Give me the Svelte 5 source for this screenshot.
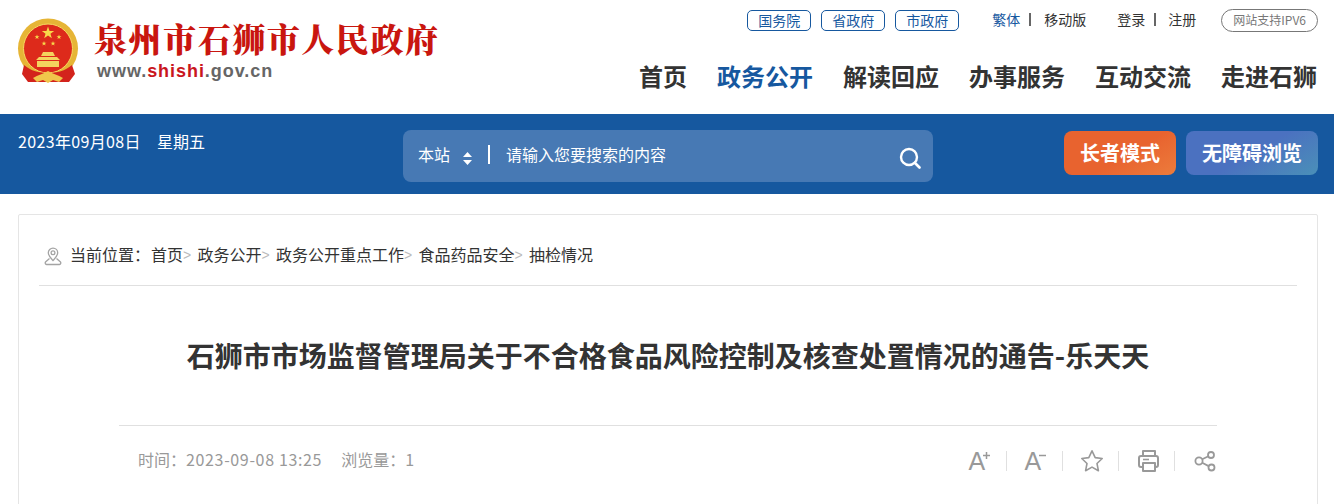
<script>
  const govLinks = ['国务院', '省政府', '市政府'];
  const nav = [
    { label: '首页' },
    { label: '政务公开', active: true },
    { label: '解读回应' },
    { label: '办事服务' },
    { label: '互动交流' },
    { label: '走进石狮' }
  ];
  const crumbs = ['首页', '政务公开', '政务公开重点工作', '食品药品安全', '抽检情况'];
  const colon = '\uFF1A';
  const star = (cx, cy, r) => {
    const pts = [];
    for (let i = 0; i < 10; i++) {
      const a = -Math.PI / 2 + (i * Math.PI) / 5;
      const d = i % 2 ? r * 0.4 : r;
      pts.push(`${(cx + d * Math.cos(a)).toFixed(2)},${(cy + d * Math.sin(a)).toFixed(2)}`);
    }
    return pts.join(' ');
  };
</script>

<div class="page">
  <header class="top">
    <div class="brand">
      <svg class="emblem" width="62" height="66" viewBox="0 0 62 66" aria-hidden="true">
        <circle cx="31" cy="30.500" r="30" fill="#e6b536" />
        <circle cx="31" cy="30.500" r="24.500" fill="#dd2a1b" stroke="#f6d860" stroke-width="1" />
        <polygon points={star(31, 15, 6.5)} fill="#f8d84a" />
        <polygon points={star(20, 19, 2.6)} fill="#f8d84a" />
        <polygon points={star(42, 19, 2.6)} fill="#f8d84a" />
        <polygon points={star(27, 25.5, 2.6)} fill="#f8d84a" />
        <polygon points={star(36, 25.5, 2.6)} fill="#f8d84a" />
        <path d="M26 34h10l2 4H24zM22 39h18l3 3H19zM20 43h22v6H20z" fill="#f4d35e" />
        <path d="M7 47c7 6 15 8 24 8s17-2 24-8l3 9-6 8H11l-6-8z" fill="#d3231c" />
        <path d="M16 60c5-3 10-4 15-7 5 3 10 4 15 7l-4 4-6-2-5 3-5-3-6 2z" fill="#f0c64b" />
      </svg>
      <div class="brand-text">
        <div class="wordmark">泉州市石狮市人民政府</div>
        <div class="domain">www.<span>shishi</span>.gov.cn</div>
      </div>
    </div>

    <div class="top-right">
      <div class="utility">
        <div class="gov-links">
          {#each govLinks as g}
            <a class="pill" href="#top">{g}</a>
          {/each}
        </div>
        <div class="text-links first">
          <a class="blue" href="#top">繁体</a><i></i><a href="#top">移动版</a>
        </div>
        <div class="text-links second">
          <a href="#top">登录</a><i></i><a href="#top">注册</a>
        </div>
        <a class="ipv6" href="#top">网站支持IPV6</a>
      </div>
      <nav class="main-nav">
        {#each nav as n}
          <a href="#top" class:active={n.active}>{n.label}</a>
        {/each}
      </nav>
    </div>
  </header>

  <section class="band">
    <div class="date"><span>2023年09月08日</span><span class="weekday">星期五</span></div>
    <div class="search">
      <span class="scope">本站</span>
      <svg class="updown" width="9" height="13" viewBox="0 0 9 13" aria-hidden="true">
        <path d="M4.5 0 9 5H0zM0 8h9l-4.500 5z" fill="#fff" />
      </svg>
      <span class="bar"></span>
      <span class="placeholder">请输入您要搜索的内容</span>
      <svg class="magnifier" width="22" height="22" viewBox="0 0 22 22" aria-hidden="true">
        <circle cx="10" cy="10" r="8" fill="none" stroke="#fff" stroke-width="2.400" />
        <path d="M16 16l4.500 4.500" stroke="#fff" stroke-width="2.600" stroke-linecap="round" />
      </svg>
    </div>
    <div class="modes">
      <a class="mode elder" href="#top">长者模式</a>
      <a class="mode access" href="#top">无障碍浏览</a>
    </div>
  </section>

  <main class="card">
    <div class="crumbs">
      <svg class="pin" width="18" height="19" viewBox="0 0 18 19" aria-hidden="true">
        <g fill="none" stroke="#a4a4a4" stroke-width="1.300">
          <path d="M9 13.500C6.500 10.800 4.300 8.800 4.300 5.800a4.700 4.700 0 0 1 9.400 0c0 3-2.200 5-4.700 7.700z" />
          <circle cx="9" cy="5.800" r="1.900" />
          <path d="M5.500 11.500 1.500 15c-.6.8-.3 2.500 1 2.500h13c1.300 0 1.600-1.700 1-2.500l-4-3.500" />
        </g>
      </svg>
      <span class="lead">当前位置{colon}</span>
      {#each crumbs as c, i}
        <a href="#top">{c}</a>{#if i < crumbs.length - 1}<span class="sep">&gt;</span>{/if}
      {/each}
    </div>

    <h1>石狮市市场监督管理局关于不合格食品风险控制及核查处置情况的通告-乐天天</h1>

    <div class="meta">
      <div class="stats">
        <span>时间{colon}<span class="num">2023-09-08 13:25</span></span>
        <span>浏览量{colon}1</span>
      </div>
      <div class="tools">
        <svg class="tool" width="24" height="24" viewBox="0 0 24 24" aria-hidden="true">
          <text class="font-a" x="1.500" y="21">A</text>
          <path d="M16 6.500h7M19.500 3v7" stroke="#999" stroke-width="1.500" />
        </svg>
        <i></i>
        <svg class="tool" width="24" height="24" viewBox="0 0 24 24" aria-hidden="true">
          <text class="font-a" x="1.500" y="21">A</text>
          <path d="M16 6.500h7" stroke="#999" stroke-width="1.500" />
        </svg>
        <i></i>
        <svg class="tool" width="24" height="24" viewBox="0 0 24 24" aria-hidden="true">
          <path d="M13 1.800l3.200 6.800 7 .9-5.200 5 1.400 7.200-6.400-3.600-6.400 3.600 1.400-7.200-5.200-5 7-.9z" fill="none" stroke="#999" stroke-width="1.600" stroke-linejoin="round" />
        </svg>
        <i></i>
        <svg class="tool" width="24" height="24" viewBox="0 0 24 24" aria-hidden="true">
          <g fill="#fff" stroke="#999" stroke-width="2" stroke-linejoin="round">
            <path d="M8 7V2h12v5" fill="none" />
            <rect x="4" y="7" width="19" height="11" rx="2" />
            <rect x="8" y="14" width="12" height="8" />
            <path d="M8 10.500h6" fill="none" stroke-width="1.600" />
          </g>
        </svg>
        <i></i>
        <svg class="tool" width="24" height="24" viewBox="0 0 24 24" aria-hidden="true">
          <g fill="none" stroke="#999" stroke-width="1.800">
            <circle cx="8" cy="12" r="3.600" />
            <circle cx="20" cy="6" r="3" />
            <circle cx="20.500" cy="18.500" r="3" />
            <path d="M11.200 10.300l6.200-3M11.200 13.700l6.500 3.400" />
          </g>
        </svg>
      </div>
    </div>
  </main>
</div>

<style>
  :global(body) {
    margin: 0;
    background: #fff;
    overflow: hidden;
  }

  .page {
    font-family: "Noto Sans CJK SC", "Noto Sans", sans-serif;
    color: #333;
    height: 504px;
    overflow: hidden;
  }

  a {
    color: inherit;
    text-decoration: none;
  }

  .top {
    height: 114px;
    box-sizing: border-box;
    padding: 0 16px 0 17px;
    display: flex;
    justify-content: space-between;
  }

  .brand {
    display: flex;
    align-items: flex-start;
    padding-top: 18px;
  }

  .brand-text {
    margin-left: 15px;
  }

  .wordmark {
    font-family: "Noto Serif CJK SC", "Noto Sans CJK SC", serif;
    font-weight: 900;
    font-size: 33px;
    letter-spacing: 1.55px;
    line-height: 40px;
    color: #c9160f;
    white-space: nowrap;
  }

  .domain {
    font-family: "Liberation Sans", sans-serif;
    font-weight: 700;
    font-size: 18px;
    letter-spacing: 0.95px;
    line-height: 22px;
    margin: 2px 0 0 3px;
    color: #666;
  }

  .domain span {
    color: #c9161d;
  }

  .top-right {
    display: flex;
    flex-direction: column;
    align-items: flex-end;
  }

  .utility {
    display: flex;
    align-items: center;
    height: 22px;
    margin-top: 9px;
    font-size: 14px;
    line-height: 20px;
    white-space: nowrap;
  }

  .gov-links {
    display: flex;
    gap: 10px;
  }

  .pill {
    box-sizing: border-box;
    width: 64px;
    height: 21px;
    line-height: 18px;
    border: 1px solid #16589f;
    border-radius: 5px;
    text-align: center;
    color: #16589f;
  }

  .text-links {
    display: flex;
    align-items: center;
    line-height: 18px;
    padding-bottom: 2px;
  }

  .text-links.first {
    margin-left: 33px;
  }

  .text-links.second {
    margin-left: 31px;
  }

  .text-links i {
    width: 2px;
    height: 13px;
    margin: 0 13px 0 9px;
    background: #666;
  }

  .text-links.second i {
    margin-right: 12px;
  }

  .text-links .blue {
    color: #16589f;
  }

  .ipv6 {
    box-sizing: border-box;
    height: 23px;
    line-height: 20px;
    margin-left: 25px;
    padding: 0 11px;
    border: 1px solid #777;
    border-radius: 12px;
    font-size: 12px;
    color: #777;
  }

  .main-nav {
    display: flex;
    gap: 30px;
    margin: 25px 0 0 0;
    padding-right: 1px;
    font-size: 24px;
    font-weight: 700;
    line-height: 40px;
    white-space: nowrap;
  }

  .main-nav .active {
    color: #16589f;
  }

  .band {
    height: 80px;
    box-sizing: border-box;
    padding: 16px 16px 0 18px;
    background: #16589f;
    color: #fff;
    display: grid;
    grid-template-columns: 385px 530px 1fr;
    align-items: start;
  }

  .date {
    display: flex;
    font-size: 16px;
    line-height: 22px;
    letter-spacing: 0.35px;
    white-space: nowrap;
  }

  .weekday {
    margin-left: 16px;
    letter-spacing: 0;
  }

  .search {
    height: 52px;
    display: flex;
    align-items: center;
    padding: 0 12px 0 15px;
    background: #4779b4;
    border-radius: 8px;
    font-size: 16px;
  }

  .scope,
  .placeholder {
    line-height: 24px;
    padding-bottom: 5px;
  }

  .placeholder {
    flex: 1;
  }

  .updown {
    margin: 4px 0 0 13px;
  }

  .bar {
    width: 2px;
    height: 19px;
    margin: 0 16px 3px;
    background: #fff;
  }

  .magnifier {
    margin-top: 3px;
  }

  .modes {
    display: flex;
    justify-content: flex-end;
    gap: 10px;
    padding-top: 1px;
  }

  .mode {
    height: 44px;
    line-height: 44px;
    border-radius: 8px;
    text-align: center;
    font-size: 20px;
    font-weight: 700;
    white-space: nowrap;
  }

  .elder {
    width: 112px;
    background: linear-gradient(150deg, #e8632f 55%, #ec7c3c);
  }

  .access {
    width: 132px;
    background: linear-gradient(150deg, #4b71c0 50%, #4a90b8);
  }

  .card {
    margin: 20px 16px 0 18px;
    box-sizing: border-box;
    height: 360px;
    padding: 0 20px;
    border: 1px solid #e5e5e5;
    border-radius: 2px 2px 0 0;
  }

  .crumbs {
    height: 71px;
    box-sizing: border-box;
    padding: 28px 0 0 5px;
    display: flex;
    align-items: flex-start;
    border-bottom: 1px solid #e0e0e0;
    font-size: 16px;
    line-height: 22px;
    white-space: nowrap;
  }

  .pin {
    margin: 4px 8px 0 0;
  }

  .lead {
    margin-right: 1px;
  }

  .sep {
    width: 14.5px;
    color: #bbb;
    font-size: 14px;
    font-family: "Liberation Sans", sans-serif;
    line-height: 24px;
  }

  h1 {
    margin: 0;
    padding: 47px 80px;
    height: 139px;
    box-sizing: border-box;
    text-align: center;
    font-size: 28px;
    font-weight: 700;
    line-height: 44px;
    color: #333;
    white-space: nowrap;
  }

  .meta {
    margin: 0 80px;
    padding: 22px 2px 0 19px;
    border-top: 1px solid #e0e0e0;
    display: flex;
    justify-content: space-between;
    align-items: flex-start;
  }

  .stats {
    display: flex;
    gap: 19px;
    font-size: 16px;
    line-height: 22px;
    color: #999;
  }

  .num {
    letter-spacing: 0.65px;
  }

  .tools {
    display: flex;
    align-items: center;
    margin-top: 1px;
  }

  .tools i {
    width: 1px;
    height: 20px;
    margin: 0 16px 0 15px;
    background: #e0e0e0;
  }

  .tool {
    display: block;
    width: 24px;
    height: 24px;
    overflow: visible;
  }

  .font-a {
    font-family: "Liberation Sans", sans-serif;
    font-size: 25px;
    fill: #999;
  }
</style>
